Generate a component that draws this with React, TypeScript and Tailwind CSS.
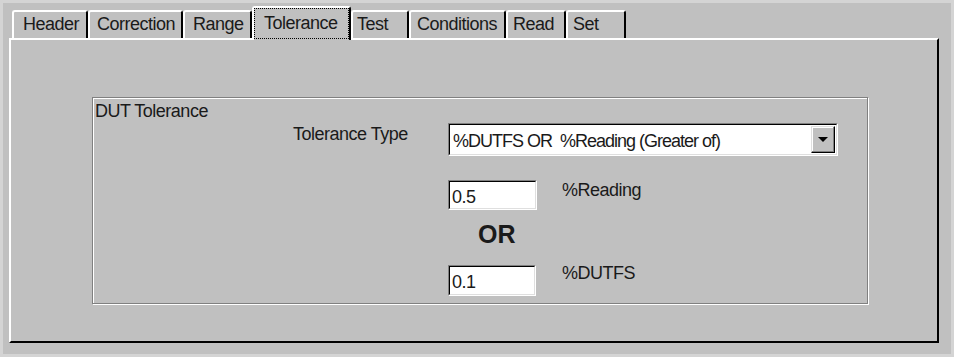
import React from 'react';

const tabs = [
  { label: 'Header', w: 'w-[76px]', pl: 'pl-[9px]' },
  { label: 'Correction', w: 'w-[95px]', pl: 'pl-[7px]' },
  { label: 'Range', w: 'w-[69px]', pl: 'pl-[8px]' },
  { label: 'Tolerance', w: 'w-[99px]', pl: 'pl-[9px]', active: true },
  { label: 'Test', w: 'w-[58px]', pl: 'pl-[4px]' },
  { label: 'Conditions', w: 'w-[97px]', pl: 'pl-[6px]' },
  { label: 'Read', w: 'w-[60px]', pl: 'pl-[5px]' },
  { label: 'Set', w: 'w-[60px]', pl: 'pl-[5px]' },
];

const Sunken = ({ className, children }: { className: string; children?: React.ReactNode }) => (
  <div className={`border border-t-[#808080] border-l-[#808080] border-r-white border-b-white ${className}`}>
    <div className="h-full w-full border border-t-black border-l-black border-r-[#dfdfdf] border-b-[#dfdfdf] bg-white flex items-center">
      {children}
    </div>
  </div>
);

export default function App() {
  return (
    <div
      className="w-[954px] h-[357px] box-border border-[3px] border-[#d4d4d4] bg-[#c0c0c0] text-[#1a1a1a] text-[18px] tracking-[-0.5px] leading-[20px] overflow-hidden"
      style={{ fontFamily: '"Liberation Sans", Arial, sans-serif' }}
    >
      {/* tab strip */}
      <div className="relative z-10 flex items-end h-[35px] pl-[9px] pt-[5px]">
        {tabs.map((t) =>
          t.active ? (
            <div
              key={t.label}
              className={`${t.w} h-[34px] -mb-[2px] bg-[#c0c0c0] border-t-2 border-l-2 border-r-2 border-t-white border-l-white border-r-black rounded-t-[3px]`}
            >
              <div className={`h-[31px] border border-dotted border-black ${t.pl} pt-[4px]`}>{t.label}</div>
            </div>
          ) : (
            <div
              key={t.label}
              className={`${t.w} h-[28px] border-t-2 border-l-2 border-r-2 border-t-white border-l-white border-r-black rounded-t-[3px] ${t.pl} pt-[2px]`}
            >
              {t.label}
            </div>
          )
        )}
      </div>

      {/* panel */}
      <div className="ml-[6px] w-[930px] h-[305px] border-2 border-t-white border-l-white border-r-black border-b-black pl-[81px] pt-[57px]">
        <div className="w-[776px] h-[207px] border border-[#808080] shadow-[inset_1px_1px_0_#fff,1px_1px_0_#fff] flex flex-col">
          <div className="pl-[2px] pt-[3px]">DUT Tolerance</div>

          <div className="flex items-start mt-[2px] pl-[200px]">
            <div className="w-[155px] pt-[1px]">Tolerance Type</div>
            <Sunken className="w-[390px] h-[33px]">
              <span className="flex-1 pl-[3px] pt-[2px] whitespace-pre tracking-[-1px]">%DUTFS OR  %Reading (Greater of)</span>
              <div className="w-[24px] h-[27px] mr-[1px] bg-[#c0c0c0] border border-t-[#dfdfdf] border-l-[#dfdfdf] border-r-black border-b-black shadow-[inset_-1px_-1px_0_#808080,inset_1px_1px_0_#fff] flex items-center justify-center">
                <svg width="10" height="5" viewBox="0 0 10 5">
                  <path d="M0 0h10L5 5z" fill="#000" />
                </svg>
              </div>
            </Sunken>
          </div>

          <div className="flex items-start mt-[24px] pl-[355px]">
            <Sunken className="w-[89px] h-[30px]">
              <span className="pl-[2px] pt-[3px]">0.5</span>
            </Sunken>
            <div className="ml-[25px]">%Reading</div>
          </div>

          <div className="mt-[10px] pl-[385px] text-[25px] leading-[28px] font-bold tracking-normal">OR</div>

          <div className="flex items-start mt-[17px] pl-[355px]">
            <Sunken className="w-[88px] h-[31px]">
              <span className="pl-[2px] pt-[3px]">0.1</span>
            </Sunken>
            <div className="ml-[26px] -mt-[2px]">%DUTFS</div>
          </div>
        </div>
      </div>
    </div>
  );
}
